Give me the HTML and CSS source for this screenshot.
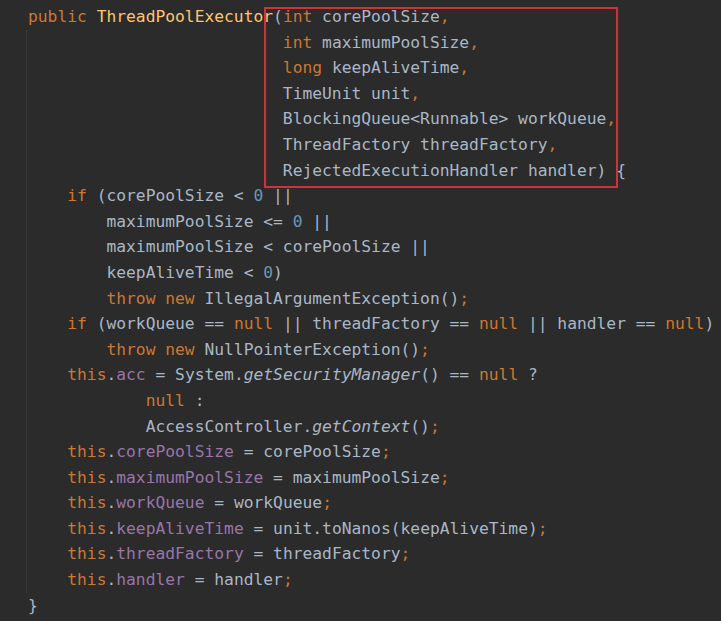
FILE: index.html
```html
<!DOCTYPE html>
<html>
<head>
<meta charset="utf-8">
<link rel="stylesheet" href="styles.css">
</head>
<body>
<div class="editor">
<div class="code">
<div class="ln"><span class="k">public </span><span class="m">ThreadPoolExecutor</span>(<span class="k">int </span>corePoolSize<span class="k">,</span></div>
<div class="block">
<div class="ln">                          <span class="k">int </span>maximumPoolSize<span class="k">,</span></div>
<div class="ln">                          <span class="k">long </span>keepAliveTime<span class="k">,</span></div>
<div class="ln">                          TimeUnit unit<span class="k">,</span></div>
<div class="ln">                          BlockingQueue&lt;Runnable&gt; workQueue<span class="k">,</span></div>
<div class="ln">                          ThreadFactory threadFactory<span class="k">,</span></div>
<div class="ln">                          RejectedExecutionHandler handler) {</div>
<div class="ln">    <span class="k">if </span>(corePoolSize &lt; <span class="n">0</span> ||</div>
<div class="ln">        maximumPoolSize &lt;= <span class="n">0</span> ||</div>
<div class="ln">        maximumPoolSize &lt; corePoolSize ||</div>
<div class="ln">        keepAliveTime &lt; <span class="n">0</span>)</div>
<div class="ln">        <span class="k">throw new </span>IllegalArgumentException()<span class="k">;</span></div>
<div class="ln">    <span class="k">if </span>(workQueue == <span class="k">null </span>|| threadFactory == <span class="k">null </span>|| handler == <span class="k">null</span>)</div>
<div class="ln">        <span class="k">throw new </span>NullPointerException()<span class="k">;</span></div>
<div class="ln">    <span class="k">this</span>.<span class="f">acc</span> = System.<span class="i">getSecurityManager</span>() == <span class="k">null </span>?</div>
<div class="ln">            <span class="k">null </span>:</div>
<div class="ln">            AccessController.<span class="i">getContext</span>()<span class="k">;</span></div>
<div class="ln">    <span class="k">this</span>.<span class="f">corePoolSize</span> = corePoolSize<span class="k">;</span></div>
<div class="ln">    <span class="k">this</span>.<span class="f">maximumPoolSize</span> = maximumPoolSize<span class="k">;</span></div>
<div class="ln">    <span class="k">this</span>.<span class="f">workQueue</span> = workQueue<span class="k">;</span></div>
<div class="ln">    <span class="k">this</span>.<span class="f">keepAliveTime</span> = unit.toNanos(keepAliveTime)<span class="k">;</span></div>
<div class="ln">    <span class="k">this</span>.<span class="f">threadFactory</span> = threadFactory<span class="k">;</span></div>
<div class="ln">    <span class="k">this</span>.<span class="f">handler</span> = handler<span class="k">;</span></div>
</div>
<div class="ln">}</div>
</div>
<div class="mark"></div>
</div>
</body>
</html>
```
FILE: styles.css
```css
html, body {
  margin: 0;
  padding: 0;
  background: #2b2b2b;
}
.editor {
  position: relative;
  width: 721px;
  height: 621px;
  overflow: hidden;
  background: #2b2b2b;
}
.code {
  padding: 4px 0 0 28px;
  font-family: "DejaVu Sans Mono", monospace;
  font-size: 16.3px;
  line-height: 25.6px;
  color: #a9b7c6;
}
.ln {
  white-space: pre;
  height: 25.6px;
}
.block {
  margin-left: -2px;
  padding-left: 1px;
  border-left: 1px solid #3a3a3a;
}
.k { color: #cc7832; }
.m { color: #ffc66d; }
.n { color: #6897bb; }
.f { color: #9876aa; }
.i { font-style: italic; }
.mark {
  position: absolute;
  left: 264px;
  top: 7px;
  width: 350px;
  height: 177px;
  border: 2px solid #d0313b;
}
```
